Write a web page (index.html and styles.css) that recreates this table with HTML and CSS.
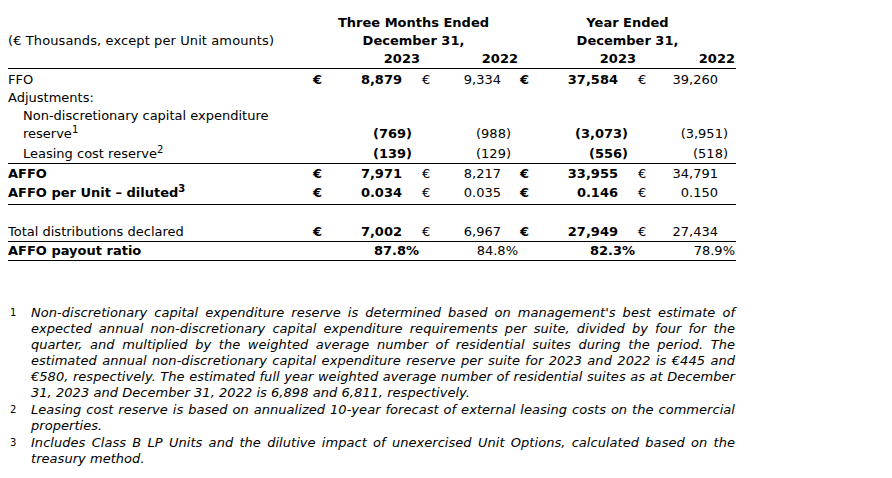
FILE: index.html
```html
<!DOCTYPE html>
<html>
<head>
<meta charset="utf-8">
<link rel="stylesheet" href="styles.css">
</head>
<body>
<table class="fin">
  <colgroup>
    <col class="c-label"><col class="c-cur1"><col class="c-val1"><col class="c-cur2"><col class="c-val2"><col class="c-cur3"><col class="c-val3"><col class="c-cur4"><col class="c-val4">
  </colgroup>
  <thead>
    <tr class="h1">
      <th></th>
      <th colspan="4" class="grp">Three Months Ended</th>
      <th colspan="4" class="grp">Year Ended</th>
    </tr>
    <tr class="h2">
      <th class="lbl-head">(€ Thousands, except per Unit amounts)</th>
      <th colspan="4" class="grp">December 31,</th>
      <th colspan="4" class="grp">December 31,</th>
    </tr>
    <tr class="h3">
      <th></th>
      <th></th><th class="yr">2023</th>
      <th></th><th class="yr y2">2022</th>
      <th></th><th class="yr">2023</th>
      <th></th><th class="yr y2">2022</th>
    </tr>
  </thead>
  <tbody>
    <tr class="r-ffo">
      <td class="lbl">FFO</td>
      <td class="cur b cu1">€</td><td class="val b"><span class="n">8,879</span></td>
      <td class="cur cu2">€</td><td class="val"><span class="n">9,334</span></td>
      <td class="cur b cu3">€</td><td class="val b"><span class="n">37,584</span></td>
      <td class="cur cu4">€</td><td class="val"><span class="n">39,260</span></td>
    </tr>
    <tr class="r-plain">
      <td class="lbl">Adjustments:</td>
      <td></td><td></td><td></td><td></td><td></td><td></td><td></td><td></td>
    </tr>
    <tr class="r-plain">
      <td class="lbl ind">Non-discretionary capital expenditure<br>reserve<sup>1</sup></td>
      <td></td><td class="val b bot"><span class="p">(769)</span></td>
      <td></td><td class="val bot"><span class="p">(988)</span></td>
      <td></td><td class="val b bot"><span class="p">(3,073)</span></td>
      <td></td><td class="val bot"><span class="p">(3,951)</span></td>
    </tr>
    <tr class="r-lease rule">
      <td class="lbl ind">Leasing cost reserve<sup>2</sup></td>
      <td></td><td class="val b"><span class="p">(139)</span></td>
      <td></td><td class="val"><span class="p">(129)</span></td>
      <td></td><td class="val b"><span class="p">(556)</span></td>
      <td></td><td class="val"><span class="p">(518)</span></td>
    </tr>
    <tr class="r-affo">
      <td class="lbl b">AFFO</td>
      <td class="cur b cu1">€</td><td class="val b"><span class="n">7,971</span></td>
      <td class="cur cu2">€</td><td class="val"><span class="n">8,217</span></td>
      <td class="cur b cu3">€</td><td class="val b"><span class="n">33,955</span></td>
      <td class="cur cu4">€</td><td class="val"><span class="n">34,791</span></td>
    </tr>
    <tr class="r-unit rule">
      <td class="lbl b">AFFO per Unit – diluted<sup>3</sup></td>
      <td class="cur b cu1">€</td><td class="val b"><span class="n">0.034</span></td>
      <td class="cur cu2">€</td><td class="val"><span class="n">0.035</span></td>
      <td class="cur b cu3">€</td><td class="val b"><span class="n">0.146</span></td>
      <td class="cur cu4">€</td><td class="val"><span class="n">0.150</span></td>
    </tr>
    <tr class="r-blank">
      <td></td><td></td><td></td><td></td><td></td><td></td><td></td><td></td><td></td>
    </tr>
    <tr class="r-total rule">
      <td class="lbl">Total distributions declared</td>
      <td class="cur b cu1">€</td><td class="val b"><span class="n">7,002</span></td>
      <td class="cur cu2">€</td><td class="val"><span class="n">6,967</span></td>
      <td class="cur b cu3">€</td><td class="val b"><span class="n">27,949</span></td>
      <td class="cur cu4">€</td><td class="val"><span class="n">27,434</span></td>
    </tr>
    <tr class="r-ratio rule">
      <td class="lbl b">AFFO payout ratio</td>
      <td></td><td class="val b"><span class="pc">87.8%</span></td>
      <td></td><td class="val"><span class="pc">84.8%</span></td>
      <td></td><td class="val b"><span class="pc">82.3%</span></td>
      <td></td><td class="val"><span class="pc">78.9%</span></td>
    </tr>
  </tbody>
</table>

<div class="notes">
  <div class="note">
    <span class="mark">1</span>
    <div class="ntext">
      <span class="ln">Non-discretionary capital expenditure reserve is determined based on management's best estimate of</span>
      <span class="ln">expected annual non-discretionary capital expenditure requirements per suite, divided by four for the</span>
      <span class="ln">quarter, and multiplied by the weighted average number of residential suites during the period. The</span>
      <span class="ln">estimated annual non-discretionary capital expenditure reserve per suite for 2023 and 2022 is €445 and</span>
      <span class="ln">€580, respectively. The estimated full year weighted average number of residential suites as at December</span>
      <span class="ln last">31, 2023 and December 31, 2022 is 6,898 and 6,811, respectively.</span>
    </div>
  </div>
  <div class="note">
    <span class="mark">2</span>
    <div class="ntext">
      <span class="ln">Leasing cost reserve is based on annualized 10-year forecast of external leasing costs on the commercial</span>
      <span class="ln last">properties.</span>
    </div>
  </div>
  <div class="note">
    <span class="mark">3</span>
    <div class="ntext">
      <span class="ln">Includes Class B LP Units and the dilutive impact of unexercised Unit Options, calculated based on the</span>
      <span class="ln last">treasury method.</span>
    </div>
  </div>
</div>
</body>
</html>
```

FILE: styles.css
```css
html, body {
  background: #fff;
}
body {
  margin: 8px;
  font-family: "DejaVu Sans", Verdana, sans-serif;
  font-size: 13px;
  color: #000;
}

.fin {
  border-collapse: collapse;
  table-layout: fixed;
  width: 728px;
}
.c-label { width: 300px; }
.c-cur1 { width: 27px; }
.c-val1 { width: 85px; }
.c-cur2 { width: 20px; }
.c-val2 { width: 79px; }
.c-cur3 { width: 21px; }
.c-val3 { width: 96px; }
.c-cur4 { width: 19px; }
.c-val4 { width: 81px; }

.fin th,
.fin td {
  padding: 0;
  line-height: 18px;
  white-space: nowrap;
  vertical-align: top;
}
.fin th {
  font-weight: bold;
}
.h1 th { padding-top: 6px; }
.grp {
  text-align: center;
  padding-left: 3px;
}
.lbl-head {
  font-weight: normal !important;
  text-align: left;
  letter-spacing: 0.1px;
}
.yr { text-align: right; }
.y2 { padding-right: 1px !important; }
.h3 th {
  border-bottom: 1px solid #000;
  height: 17px;
}

.lbl {
  text-align: left;
}
.ind { padding-left: 15px !important; }
.b { font-weight: bold; }
.cur { text-align: left; }
.cu1 { padding-left: 5px !important; }
.cu2 { padding-left: 2px !important; }
.cu3 { padding-left: 1px !important; }
.cu4 { padding-left: 2px !important; }
.val { text-align: right; }
.bot { vertical-align: bottom !important; }
.n { padding-right: 18px; }
.p { padding-right: 8px; }
.pc { padding-right: 1px; }

sup {
  font-size: 10px;
  line-height: 0;
  vertical-align: 5px;
}

.r-ffo td { padding-top: 2px; }
.r-lease td { padding-top: 2px; }
.r-affo td { padding-top: 1px; }
.r-unit td { padding-top: 1px; padding-bottom: 2px; }
.r-blank td { height: 18px; }
.rule td { border-bottom: 1px solid #000; }

.notes {
  margin-top: 44px;
  font-style: italic;
  line-height: 16px;
}
.note {
  display: grid;
  grid-template-columns: 23px 704px;
  margin-bottom: 1px;
}
.mark {
  font-style: normal;
  font-size: 10px;
  line-height: 10px;
  padding-left: 2px;
  padding-top: 3px;
}
.ntext {
  display: flex;
  flex-direction: column;
  letter-spacing: 0.04px;
}
.ln {
  display: block;
  white-space: nowrap;
  text-align: justify;
  text-align-last: justify;
}
.ln.last {
  text-align-last: left;
}
```
